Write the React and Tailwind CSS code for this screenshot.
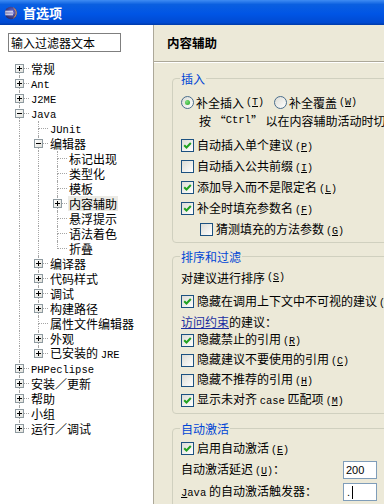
import React from 'react';

const cjk = "font-['Noto_Sans_CJK_SC','Noto_Sans_CJK_JP',sans-serif]";

// [depth, label, expander, selected]
const tree = [
  [0, '常规', '+'],
  [0, 'Ant', '+'],
  [0, 'J2ME', '+'],
  [0, 'Java', '-'],
  [1, 'JUnit', null],
  [1, '编辑器', '-'],
  [2, '标记出现', null],
  [2, '类型化', null],
  [2, '模板', null],
  [2, '内容辅助', '+', true],
  [2, '悬浮提示', null],
  [2, '语法着色', null],
  [2, '折叠', null],
  [1, '编译器', '+'],
  [1, '代码样式', '+'],
  [1, '调试', '+'],
  [1, '构建路径', '+'],
  [1, '属性文件编辑器', null],
  [1, '外观', '+'],
  [1, '已安装的 JRE', '+'],
  [0, 'PHPeclipse', '+'],
  [0, '安装／更新', '+'],
  [0, '帮助', '+'],
  [0, '小组', '+'],
  [0, '运行／调试', '+'],
];

// does something at level a still follow row i (before the branch closes)?
const hasLater = (i, a) => {
  for (let j = i + 1; j < tree.length; j++) {
    if (tree[j][0] < a) return false;
    if (tree[j][0] === a) return true;
  }
  return false;
};

// latin runs in the narrow monospace look of the dialog font
const Lat = ({ children }) => (
  <span className="font-['Liberation_Mono',monospace] text-[10.5px]">{children}</span>
);

const Key = ({ k }) => (
  <span className="ml-[2px] font-['Liberation_Mono',monospace] text-[10px]">
    (<span className="underline">{k}</span>)
  </span>
);

// split text so ascii words get the latin font
function Mixed({ text }) {
  const parts = text.split(/([A-Za-z0-9]+)/);
  return parts.map((p, i) => (/^[A-Za-z0-9]+$/.test(p) ? <Lat key={i}>{p}</Lat> : <span key={i}>{p}</span>));
}

function ExpBox({ sign }) {
  return (
    <span className="absolute left-[5px] top-[3px] w-[9px] h-[9px] border border-[#8e9aa0] bg-[linear-gradient(135deg,#ffffff,#e2e2dc)] flex items-center justify-center">
      <svg width="7" height="7" viewBox="0 0 7 7">
        <path d="M1 3.5 H6" stroke="#000" strokeWidth="1" />
        {sign === '+' && <path d="M3.5 1 V6" stroke="#000" strokeWidth="1" />}
      </svg>
    </span>
  );
}

function TreeRow({ item, i }) {
  const [d, label, box, sel] = item;
  const cells = [];
  for (let a = 0; a <= d; a++) {
    const own = a === d;
    cells.push(
      <span key={a} className="relative w-[19px] h-[15px] shrink-0">
        {!own && hasLater(i, a) && (
          <span className="absolute left-[9px] top-0 h-full border-l border-dotted border-[#a5a5a5]" />
        )}
        {own && i > 0 && <span className="absolute left-[9px] top-0 h-[8px] border-l border-dotted border-[#a5a5a5]" />}
        {own && hasLater(i, d) && (
          <span className="absolute left-[9px] top-[7px] bottom-0 border-l border-dotted border-[#a5a5a5]" />
        )}
        {own && <span className="absolute left-[10px] right-0 top-[7px] border-t border-dotted border-[#a5a5a5]" />}
        {own && box && <ExpBox sign={box} />}
      </span>
    );
  }
  return (
    <div className="flex h-[15px] items-center">
      {cells}
      <span className={`ml-[1px] px-[1px] leading-[15px] whitespace-nowrap ${sel ? 'bg-[#ecebe6]' : ''}`}>
        <Mixed text={label} />
      </span>
    </div>
  );
}

function Check({ on }) {
  return (
    <span className="w-[13px] h-[13px] shrink-0 border border-[#1c5180] bg-[linear-gradient(135deg,#dcdcd5,#ffffff)] flex items-center justify-center">
      {on && (
        <svg width="9" height="9" viewBox="0 0 9 9">
          <path d="M1.2 4.2 L3.5 6.5 L7.8 2" stroke="#21a121" strokeWidth="2" fill="none" />
        </svg>
      )}
    </span>
  );
}

function Radio({ on }) {
  return (
    <span className="w-[13px] h-[13px] shrink-0 rounded-full border border-[#4a6d8c] bg-[linear-gradient(135deg,#dcdcd5,#ffffff)] flex items-center justify-center">
      {on && <span className="w-[5px] h-[5px] rounded-full bg-[radial-gradient(circle_at_35%_35%,#7fe07f,#21a121)]" />}
    </span>
  );
}

function CheckRow({ on, children, className = 'h-[20px]' }) {
  return (
    <div className={`flex items-center gap-[3px] whitespace-nowrap ${className}`}>
      <Check on={on} />
      <span>{children}</span>
    </div>
  );
}

function Group({ title, className = '', children }) {
  return (
    <fieldset className={`w-[250px] border border-[#d0d0bf] rounded-[4px] pl-[8px] ${className}`}>
      <legend className="px-[1px] -ml-[1px] leading-[15px] text-[#0046d5]">{title}</legend>
      {children}
    </fieldset>
  );
}

function TitleIcon() {
  return (
    <svg width="14" height="14" viewBox="0 0 14 14">
      <defs>
        <radialGradient id="ec" cx="0.6" cy="0.4" r="0.7">
          <stop offset="0" stopColor="#6b6bd0" />
          <stop offset="1" stopColor="#26245a" />
        </radialGradient>
      </defs>
      <circle cx="7" cy="7" r="6.2" fill="url(#ec)" />
      <path d="M1.2 5.2 H9 M0.9 7 H9.5 M1.2 8.8 H9" stroke="#f4f4ff" strokeWidth="1.1" />
      <path d="M9.5 2 A6 6 0 0 1 9.5 12" stroke="#e0a050" strokeWidth="1" fill="none" />
    </svg>
  );
}

export default function App() {
  return (
    <div className={`w-[384px] h-[504px] overflow-hidden flex flex-col text-[12px] text-black ${cjk}`}>
      {/* title bar */}
      <div className="h-[25px] shrink-0 flex items-center gap-[5px] pl-[4px] bg-[linear-gradient(to_bottom,#3f8cf3,#0a5fe0_18%,#0055e5_55%,#004ad2_90%,#003aa8)]">
        <TitleIcon />
        <span className="text-white font-bold text-[13px] leading-none">首选项</span>
      </div>

      <div className="flex flex-1 min-h-0">
        {/* left: filter + tree */}
        <div className="w-[154px] shrink-0 bg-white border-r border-[#aca899]">
          <div className="ml-[8px] mt-[8px] w-[113px] h-[19px] border border-[#7f7f7f] flex items-center pl-[2px] leading-none">
            输入过滤器文本
          </div>
          <div className="mt-[9px] pl-[10px]">
            {tree.map((item, i) => (
              <TreeRow key={i} item={item} i={i} />
            ))}
          </div>
        </div>

        {/* right: page */}
        <div className="flex-1 min-w-0 bg-[#ece9d8] overflow-hidden">
          <div className="h-[36px] flex items-center pl-[13px] font-bold text-[12.5px]">内容辅助</div>
          <div className="border-t border-[#aca899]" />
          <div className="border-t border-white" />

          <div className="pl-[18px] pt-[8px] leading-[15px]">
            <Group title="插入" className="pb-[2px]">
              <div className="mt-[6px] h-[20px] flex items-center whitespace-nowrap">
                <Radio on />
                <span className="ml-[2px]">补全插入</span>
                <Key k="T" />
                <span className="ml-[10px]"><Radio /></span>
                <span className="ml-[2px]">补全覆盖</span>
                <Key k="W" />
              </div>
              <div className="h-[16px] flex items-center pl-[18px] whitespace-nowrap">
                按 “<Lat>Ctrl</Lat>” 以在内容辅助活动时切换建议插入和覆盖
              </div>
              <div className="mt-[7px]">
                <CheckRow on className="h-[21px]">自动插入单个建议<Key k="P" /></CheckRow>
                <CheckRow className="h-[21px]">自动插入公共前缀<Key k="I" /></CheckRow>
                <CheckRow on className="h-[21px]">添加导入而不是限定名<Key k="L" /></CheckRow>
                <CheckRow on className="h-[21px]">补全时填充参数名<Key k="F" /></CheckRow>
                <div className="pl-[19px]">
                  <CheckRow className="h-[21px]">猜测填充的方法参数<Key k="G" /></CheckRow>
                </div>
              </div>
            </Group>

            <Group title="排序和过滤" className="mt-[6px] pb-[3px]">
              <div className="mt-[3px] h-[21px] flex items-center whitespace-nowrap">
                对建议进行排序<Key k="S" />
              </div>
              <CheckRow on className="mt-[3px] h-[21px]">隐藏在调用上下文中不可视的建议<Key k="V" /></CheckRow>
              <div className="h-[18px] flex items-center whitespace-nowrap">
                <span className="text-[#1b2fa0] underline">访问约束</span>的建议：
              </div>
              <CheckRow on>隐藏禁止的引用<Key k="R" /></CheckRow>
              <CheckRow>隐藏建议不要使用的引用<Key k="C" /></CheckRow>
              <CheckRow>隐藏不推荐的引用<Key k="H" /></CheckRow>
              <CheckRow on>显示未对齐 <Lat>case</Lat> 匹配项<Key k="M" /></CheckRow>
            </Group>

            <Group title="自动激活" className="mt-[7px] pb-[4px]">
              <CheckRow on className="mt-[2px] h-[21px]">启用自动激活<Key k="E" /></CheckRow>
              <div className="h-[22px] flex items-center whitespace-nowrap">
                <span className="w-[162px] shrink-0">自动激活延迟<Key k="U" />：</span>
                <span className="w-[34px] h-[18px] border border-[#7f9db9] bg-white flex items-center pl-[2px] font-['Liberation_Sans',sans-serif] text-[11px]">
                  200
                </span>
              </div>
              <div className="h-[22px] flex items-center whitespace-nowrap">
                <span className="w-[162px] shrink-0">
                  <Lat><span className="underline">J</span>ava</Lat> 的自动激活触发器：
                </span>
                <span className="w-[34px] h-[18px] border border-[#7f9db9] bg-white flex items-center pl-[3px] font-['Liberation_Sans',sans-serif] text-[11px]">
                  .<span className="ml-[2px] w-[1px] h-[13px] bg-black" />
                </span>
              </div>
            </Group>
          </div>
        </div>
      </div>
    </div>
  );
}
